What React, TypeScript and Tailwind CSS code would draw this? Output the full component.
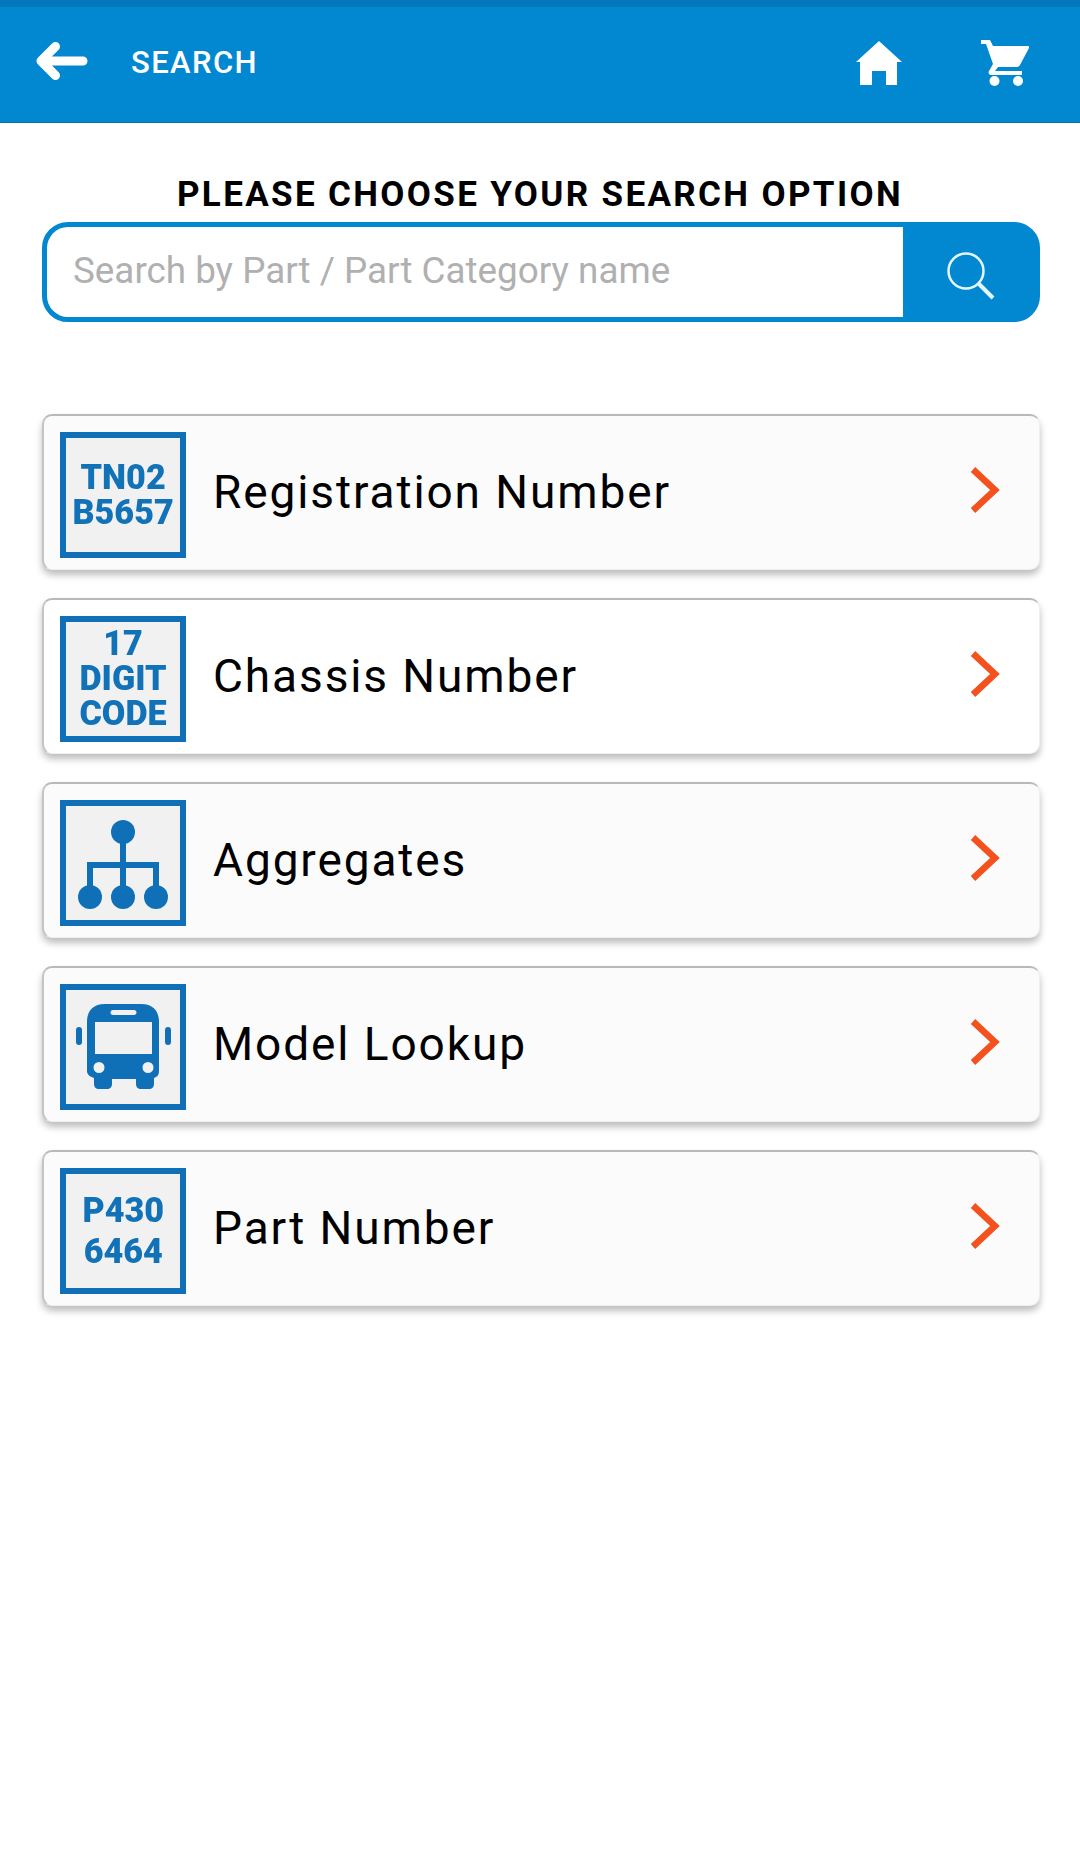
import React from "react";

const BLUE = "#0f70b7";

function IconText({ lines, pitch }: { lines: string[]; pitch: number }) {
  return (
    <div className="flex flex-col items-center font-black text-[#1272b8] text-[34.500px] blur-[0.5px] [transform:scaleX(0.99)]">
      {lines.map((l) => (
        <span key={l} className="block" style={{ lineHeight: `${pitch}px`, height: pitch }}>
          {l}
        </span>
      ))}
    </div>
  );
}

function Org() {
  return (
    <svg viewBox="0 0 100 100" className="w-[100px] h-[100px] blur-[0.4px]" fill={BLUE} stroke="none">
      <circle cx="50" cy="19" r="12" />
      <circle cx="17" cy="84" r="12" />
      <circle cx="50" cy="84" r="12" />
      <circle cx="83" cy="84" r="12" />
      <path d="M47 19h6v30h33v35h-6V55H53v29h-6V55H20v29h-6V49h33z" />
    </svg>
  );
}

function Bus() {
  return (
    <svg viewBox="0 0 97 86" className="w-[97px] h-[86px] blur-[0.4px]" fill={BLUE}>
      <path
        fillRule="evenodd"
        d="M30 0h36c12 0 18 7 18 18v49c0 4-2 6-5 7v6c0 3-2 5-5 5h-8c-3 0-5-2-5-5v-5H37v5c0 3-2 5-5 5h-8c-3 0-5-2-5-5v-6c-3-1-7-3-7-7V18C12 7 18 0 30 0zM38 6c-1.500 0-2.500 1-2.500 2.500S36.500 11 38 11h21c1.500 0 2.500-1 2.500-2.500S60.500 6 59 6zM20 18v32h57V18zM24 58a5.500 5.500 0 1 0 0 11a5.500 5.500 0 1 0 0-11zM73 58a5.500 5.500 0 1 0 0 11a5.500 5.500 0 1 0 0-11z"
      />
      <rect x="1" y="23" width="6" height="18" rx="3" />
      <rect x="90" y="23" width="6" height="18" rx="3" />
    </svg>
  );
}

const rows: { label: string; bg: string; icon: React.ReactNode }[] = [
  { label: "Registration Number", bg: "bg-[#fbfbfb]", icon: <IconText lines={["TN02", "B5657"]} pitch={35} /> },
  { label: "Chassis Number", bg: "bg-white", icon: <IconText lines={["17", "DIGIT", "CODE"]} pitch={35} /> },
  { label: "Aggregates", bg: "bg-[#fbfbfb]", icon: <Org /> },
  { label: "Model Lookup", bg: "bg-[#fbfbfb]", icon: <Bus /> },
  { label: "Part Number", bg: "bg-[#fbfbfb]", icon: <IconText lines={["P430", "6464"]} pitch={41} /> },
];

export default function App() {
  return (
    <div className="w-[1080px] h-[1864px] bg-white overflow-hidden font-['Roboto',sans-serif]">
      <header className="h-[123px] bg-[#0288d1] border-t-[7px] border-t-[#0277bd] border-b-[1px] border-b-[#0b6ea8] flex items-center">
        <svg viewBox="0 0 52 40" className="ml-[36px] w-[52px] h-[40px] mt-[-7px]" fill="none" stroke="white" strokeWidth="9" strokeLinecap="round" strokeLinejoin="round">
          <path d="M47 20H6M19.500 5.500L5 20l14.500 14.500" />
        </svg>
        <span className="ml-[43px] text-white text-[31px] font-medium tracking-[1.400px] mt-[-3px]">SEARCH</span>
        <div className="ml-auto flex items-center mr-[51px] mt-[-3px]">
          <svg viewBox="0 0 46 44" className="w-[46px] h-[44px]" fill="white">
            <path d="M23 0L46 21H41V44H30V30H16V44H4V21H0z" />
          </svg>
          <svg viewBox="0 0 48 46" className="ml-[79px] w-[48px] h-[46px]" fill="white">
            <path d="M0 0h9l3 6h35c1 0 1.500 1 1 2L39 25c-1 1.500-2 2-4 2H17l-3 4h27v4H10c-2 0-3-2-2-4l4-7L5 4H0z" />
            <circle cx="13.500" cy="41" r="5" />
            <circle cx="37" cy="41" r="5" />
          </svg>
        </div>
      </header>

      <main className="px-[42px]">
        <h1 className="mt-[49px] text-center text-black text-[35px] leading-[46px] font-bold tracking-[2.350px]">
          PLEASE CHOOSE YOUR SEARCH OPTION
        </h1>

        <div className="mt-[4px] w-[998px] h-[100px] flex rounded-[26px] border-[5px] border-[#0288d1] bg-[#0288d1]">
          <div className="flex-1 bg-white rounded-l-[21px] flex items-center pl-[26px] pb-[3px] text-[#b0b0b0] text-[36.800px]">
            Search by Part / Part Category name
          </div>
          <div className="w-[132px] flex items-center justify-center">
            <svg viewBox="0 0 48 48" className="w-[48px] h-[48px] ml-[3px] mt-[7px]" fill="none" stroke="#e6f6ff">
              <circle cx="19" cy="19" r="17.500" strokeWidth="2.500" />
              <path d="M32 32l14 14" strokeWidth="4" />
            </svg>
          </div>
        </div>

        <div className="mt-[92px] flex flex-col gap-[28px] w-[998px]">
          {rows.map((r) => (
            <div
              key={r.label}
              className={`h-[156px] ${r.bg} rounded-[10px] border border-[#efefef] border-t-[2px] border-t-[#b9b9b9] border-l-[2px] border-l-[#c4c4c4] shadow-[0_5px_7px_rgba(0,0,0,0.26)] flex items-center pl-[16px]`}
            >
              <div className="w-[126px] h-[126px] mt-[4px] shrink-0 border-[6px] border-[#0f70b7] bg-[#f1f1f1] flex items-center justify-center">
                {r.icon}
              </div>
              <span className="ml-[27px] mb-[1px] text-black text-[46px] tracking-[1.900px]">{r.label}</span>
              <svg viewBox="0 0 30 46" className="ml-auto mr-[39px] mb-[5px] w-[30px] h-[46px]" fill="none" stroke="#f4511e" strokeWidth="6.500">
                <path d="M3 2.500L25 23L3 43.500" />
              </svg>
            </div>
          ))}
        </div>
      </main>
    </div>
  );
}
